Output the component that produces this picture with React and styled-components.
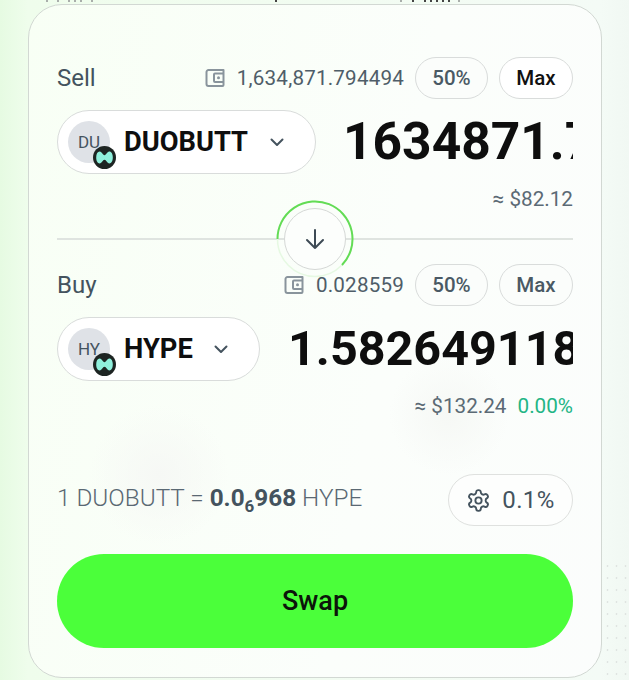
import React from "react";
import styled, { createGlobalStyle } from "styled-components";

const Global = createGlobalStyle`
  html, body { margin: 0; padding: 0; width: 629px; height: 680px; overflow: hidden; }
  body { font-family: Roboto, "Liberation Sans", sans-serif; color: #44535e; }
`;

const Page = styled.div`
  position: relative;
  width: 629px;
  height: 680px;
  overflow: hidden;
  box-sizing: border-box;
  padding: 4px 27px 0 28px;
  background: linear-gradient(90deg, #e6fbe2 0, #effdec 28px, #f4fbf6 600px, #f1f8f3 100%);
`;

const TopSpecks = styled.svg`
  position: absolute;
  left: 0;
  top: 0;
  width: 629px;
  height: 3px;
`;

const DotField = styled.div`
  position: absolute;
  right: 0;
  bottom: 0;
  width: 26px;
  height: 120px;
  background-image: radial-gradient(circle, #dfe4e1 0.8px, transparent 1.2px);
  background-size: 9px 12px;
`;

const Card = styled.main`
  position: relative;
  box-sizing: border-box;
  width: 574px;
  height: 674px;
  padding: 52px 28px 0;
  border: 1.5px solid #d2d8d3;
  border-radius: 34px;
  background:
    radial-gradient(circle at 130px 470px, #f6f8f5 0, rgba(246,248,245,0) 70px),
    radial-gradient(circle at 420px 410px, #f6f8f5 0, rgba(246,248,245,0) 60px),
    linear-gradient(100deg, #f8fff5 0%, #fbfefb 60%, #fbfdfc 100%);
  display: flex;
  flex-direction: column;
`;

const HeaderRow = styled.div`
  display: flex;
  align-items: center;
  height: 42px;
`;

const Label = styled.div`
  font-size: 24px;
  line-height: 42px;
  color: #44535e;
  margin-right: auto;
`;

const Balance = styled.div`
  display: flex;
  align-items: center;
  gap: 12px;
  font-size: 20.6px;
  letter-spacing: 0.2px;
  color: #4f5d68;
  margin-right: 11px;
`;

const Pct = styled.button`
  box-sizing: border-box;
  width: ${(p) => p.$w}px;
  height: 42px;
  margin-left: ${(p) => p.$ml || 0}px;
  padding: 0;
  border: 1.5px solid #d9dcdb;
  border-radius: 21px;
  background: ${(p) => (p.$strong ? "#ffffff" : "#fbfdfb")};
  font-family: inherit;
  font-size: 20.5px;
  font-weight: 500;
  color: ${(p) => (p.$strong ? "#111111" : "#4a5964")};
`;

const TokenRow = styled.div`
  display: flex;
  align-items: center;
  height: 64px;
  margin-top: 11px;
  min-width: 0;
`;

const TokenPill = styled.button`
  box-sizing: border-box;
  width: ${(p) => p.$w}px;
  flex: none;
  height: 64px;
  padding: 0 0 0 10px;
  display: flex;
  align-items: center;
  border: 1.5px solid #d9dcdb;
  border-radius: 32px;
  background: #fff;
  font-family: inherit;
`;

const Avatar = styled.span`
  position: relative;
  flex: none;
  width: 42px;
  height: 42px;
  border-radius: 50%;
  background: #dfe2e7;
  color: #45535f;
  font-size: 17px;
  display: flex;
  align-items: center;
  justify-content: center;
`;

const Chain = styled.svg`
  position: absolute;
  right: -6px;
  bottom: -6px;
  width: 23px;
  height: 23px;
`;

const TokenName = styled.span`
  margin-left: 14px;
  font-size: 27.3px;
  font-weight: 700;
  color: #0e0e0e;
`;

const Chevron = styled.svg`
  width: 18px;
  height: 18px;
  margin-left: ${(p) => p.$ml}px;
  flex: none;
`;

const Amount = styled.div`
  flex: 1;
  min-width: 0;
  margin-left: ${(p) => p.$ml}px;
  overflow: hidden;
  white-space: nowrap;
  font-size: ${(p) => p.$size}px;
  font-weight: 700;
  line-height: 64px;
  color: #0e0e0e;
`;

const FiatRow = styled.div`
  display: flex;
  justify-content: flex-end;
  align-items: center;
  gap: 11px;
  height: 24px;
  margin-top: 13px;
  font-size: 20.7px;
  color: #5b6a75;
`;

const Delta = styled.span`
  color: #22b585;
`;

const Divider = styled.div`
  position: relative;
  height: 2px;
  margin: 27px 0 24px;
  background: #dfe4e0;
`;

const FlipWrap = styled.div`
  position: absolute;
  left: 219px;
  top: -38px;
  width: 78px;
  height: 78px;
`;

const Ring = styled.svg`
  position: absolute;
  inset: 0;
  width: 78px;
  height: 78px;
`;

const FlipButton = styled.button`
  position: absolute;
  left: 8px;
  top: 8px;
  box-sizing: border-box;
  width: 62px;
  height: 62px;
  padding: 0;
  border: 1.5px solid #d5d8d6;
  border-radius: 50%;
  background: #fcfefc;
  display: flex;
  align-items: center;
  justify-content: center;
`;

const RateRow = styled.div`
  display: flex;
  align-items: center;
  justify-content: space-between;
  height: 52px;
  margin-top: 56px;
`;

const Rate = styled.div`
  padding-bottom: 5px;
  font-size: 24.3px;
  color: #5a6873;
  font-weight: 300;
  b { font-weight: 700; color: #44535e; }
  sub { font-size: 17px; font-weight: 700; color: #44535e; line-height: 0; vertical-align: -6px; }
`;

const Slippage = styled.button`
  box-sizing: border-box;
  width: 125px;
  height: 52px;
  padding: 0;
  border: 1.5px solid #dfe1df;
  border-radius: 26px;
  background: #fdfefd;
  display: flex;
  align-items: center;
  justify-content: center;
  gap: 11px;
  font-family: inherit;
  font-size: 24px;
  letter-spacing: 0.4px;
  font-weight: 400;
  color: #44535e;
`;

const SwapButton = styled.button`
  height: 94px;
  margin-top: 28px;
  border: 0;
  border-radius: 47px;
  background: #4bff3a;
  color: #0c160a;
  font-family: inherit;
  font-size: 27px;
  font-weight: 500;
`;

const ChainBadge = () => (
  <Chain viewBox="0 0 23 23">
    <circle cx="11.5" cy="11.5" r="11.5" fill="#1d2422" />
    <path d="M3.2 11.500C3.2 7.800 4.700 5.600 6.600 5.600c2.300 0 3.100 3.700 4.900 3.700s2.600-3.700 4.900-3.700c1.900 0 3.400 2.200 3.400 5.900s-1.500 5.900-3.400 5.900c-2.300 0-3.100-3.700-4.900-3.700s-2.600 3.700-4.900 3.700c-1.900 0-3.400-2.200-3.400-5.900z" fill="#8ff0dc" />
  </Chain>
);

const ChevronIcon = ({ ml }) => (
  <Chevron $ml={ml} viewBox="0 0 18 18" fill="none" stroke="#44535e" strokeWidth="2" strokeLinecap="round" strokeLinejoin="round">
    <path d="M3.5 6.5 9 12l5.5-5.5" />
  </Chevron>
);

const WalletIcon = () => (
  <svg width="20" height="20" viewBox="0 0 20 20" fill="none" stroke="#89949c" strokeWidth="2">
    <path d="M18.500 2H3.500A2 2 0 0 0 1.500 4v12a2 2 0 0 0 2 2h14a1 1 0 0 0 1-1z" strokeLinejoin="round" />
    <path d="M18.500 5.500H10a1 1 0 0 0-1 1V13a1 1 0 0 0 1 1h8.500" />
    <circle cx="13.500" cy="9.800" r="1.500" fill="#89949c" stroke="none" />
  </svg>
);

const Token = ({ short, name, w, ml }) => (
  <TokenPill $w={w}>
    <Avatar>
      {short}
      <ChainBadge />
    </Avatar>
    <TokenName>{name}</TokenName>
    <ChevronIcon ml={ml} />
  </TokenPill>
);

const specks = [46, 57, 68, 74, 80, 91, 275, 400, 412, 424, 430, 436, 442, 448, 458];

export default function App() {
  return (
    <>
      <Global />
      <Page>
        <TopSpecks viewBox="0 0 629 3">
          {specks.map((x, i) => (
            <rect key={x} x={x} y="0" width="2" height="2" fill={i === 6 || (i > 7 && i < 14) ? "#444" : "#a9aeab"} />
          ))}
        </TopSpecks>
        <DotField />
        <Card>
          <HeaderRow>
            <Label>Sell</Label>
            <Balance>
              <WalletIcon />
              1,634,871.794494
            </Balance>
            <Pct $w={73}>50%</Pct>
            <Pct $w={74} $ml={11} $strong>Max</Pct>
          </HeaderRow>
          <TokenRow>
            <Token short="DU" name="DUOBUTT" w={259} ml={20} />
            <Amount $ml={27} $size={51.500}>1634871.794494</Amount>
          </TokenRow>
          <FiatRow>≈ $82.12</FiatRow>
          <Divider>
            <FlipWrap>
              <Ring viewBox="0 0 78 78" fill="none">
                <circle cx="39" cy="39" r="37.500" stroke="#e6f9e2" strokeWidth="1.500" />
                <path d="M1.500 39A37.500 37.500 0 1 1 66 65" stroke="#63dc55" strokeWidth="2" />
              </Ring>
              <FlipButton>
                <svg width="24" height="24" viewBox="0 0 24 24" fill="none" stroke="#3d4a54" strokeWidth="2" strokeLinecap="round" strokeLinejoin="round">
                  <path d="M12 3v18M4 13l8 8 8-8" />
                </svg>
              </FlipButton>
            </FlipWrap>
          </Divider>
          <HeaderRow>
            <Label>Buy</Label>
            <Balance>
              <WalletIcon />
              0.028559
            </Balance>
            <Pct $w={73}>50%</Pct>
            <Pct $w={74} $ml={11}>Max</Pct>
          </HeaderRow>
          <TokenRow>
            <Token short="HY" name="HYPE" w={203} ml={19} />
            <Amount $ml={28} $size={48.500}>1.58264911883</Amount>
          </TokenRow>
          <FiatRow>
            <span>≈ $132.24</span>
            <Delta>0.00%</Delta>
          </FiatRow>
          <RateRow>
            <Rate>
              1 DUOBUTT = <b>0.0<sub>6</sub>968</b> HYPE
            </Rate>
            <Slippage>
              <svg width="25" height="25" viewBox="0 0 24 24" fill="none" stroke="#44535e" strokeWidth="1.800" strokeLinecap="round" strokeLinejoin="round">
                <path d="M12.220 2h-.440a2 2 0 0 0-2 2v.180a2 2 0 0 1-1 1.730l-.430.250a2 2 0 0 1-2 0l-.150-.080a2 2 0 0 0-2.730.730l-.220.380a2 2 0 0 0 .730 2.730l.150.100a2 2 0 0 1 1 1.720v.510a2 2 0 0 1-1 1.740l-.150.090a2 2 0 0 0-.730 2.730l.220.380a2 2 0 0 0 2.730.730l.150-.080a2 2 0 0 1 2 0l.430.250a2 2 0 0 1 1 1.730V20a2 2 0 0 0 2 2h.440a2 2 0 0 0 2-2v-.180a2 2 0 0 1 1-1.730l.430-.250a2 2 0 0 1 2 0l.150.080a2 2 0 0 0 2.730-.730l.220-.390a2 2 0 0 0-.730-2.730l-.150-.080a2 2 0 0 1-1-1.740v-.500a2 2 0 0 1 1-1.740l.150-.090a2 2 0 0 0 .730-2.730l-.220-.380a2 2 0 0 0-2.730-.730l-.150.080a2 2 0 0 1-2 0l-.430-.250a2 2 0 0 1-1-1.730V4a2 2 0 0 0-2-2z" />
                <circle cx="12" cy="12" r="3" />
              </svg>
              0.1%
            </Slippage>
          </RateRow>
          <SwapButton>Swap</SwapButton>
        </Card>
      </Page>
    </>
  );
}
